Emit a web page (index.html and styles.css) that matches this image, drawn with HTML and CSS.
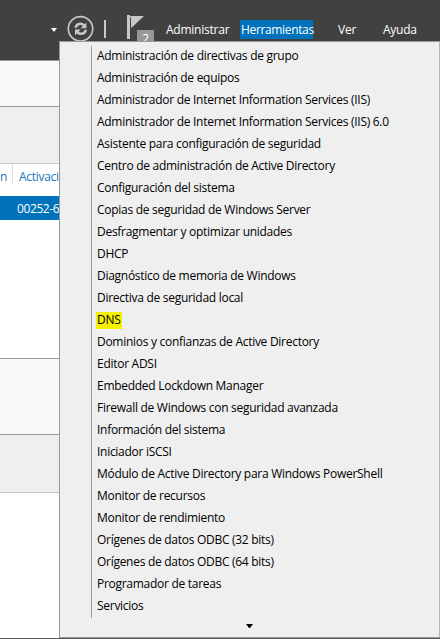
FILE: index.html
```
<!DOCTYPE html>
<html lang="es">
<head>
<meta charset="utf-8">
<title>Herramientas</title>
<link rel="stylesheet" href="styles.css">
</head>
<body>
<div class="window">
  <header class="toolbar">
    <span class="caret"></span>
    <svg class="refresh" width="28" height="28" viewBox="0 0 28 28" fill="none" stroke="#c8c8c8">
      <circle cx="13.5" cy="13.8" r="12.2" stroke-width="1.6"/>
      <path d="M8.8 12.8C9 9 14 7.4 17.2 10.4M18.6 14.8C18.4 18.6 13.6 20.2 10.4 17.2" stroke-width="2.6"/>
      <path d="M19.4 7.4v5.8h-5.8zM8 20.2v-5.8h5.8z" fill="#c8c8c8" stroke="none"/>
    </svg>
    <span class="divider"></span>
    <div class="flag">
      <svg width="28" height="27" viewBox="0 0 28 27">
        <path d="M0 0h3v24H0zM3 1h14L4.3 13z" fill="#c8c8c8"/>
        <path d="M3.5 2.5v9" stroke="#414141"/>
      </svg>
      <span class="badge">2</span>
    </div>
    <nav class="menubar">
      <span class="m1">Administrar</span><span class="m2 active">Herramientas</span><span class="m3">Ver</span><span class="m4">Ayuda</span>
    </nav>
  </header>
  <main class="content">
    <div class="band light first"></div>
    <div class="band gray upper"></div>
    <div class="row heads"><span class="prev">n</span><span class="col">Activaci</span></div>
    <div class="row selected"><span>00252-6</span></div>
    <div class="space"></div>
    <div class="band light second"></div>
    <div class="band gray lower"></div>
  </main>
  <div class="dropdown">
    <ul class="items">
      <li>Administración de directivas de grupo</li>
      <li>Administración de equipos</li>
      <li>Administrador de Internet Information Services (IIS)</li>
      <li>Administrador de Internet Information Services (IIS) 6.0</li>
      <li>Asistente para configuración de seguridad</li>
      <li>Centro de administración de Active Directory</li>
      <li>Configuración del sistema</li>
      <li>Copias de seguridad de Windows Server</li>
      <li>Desfragmentar y optimizar unidades</li>
      <li>DHCP</li>
      <li>Diagnóstico de memoria de Windows</li>
      <li>Directiva de seguridad local</li>
      <li><mark>DNS</mark></li>
      <li>Dominios y confianzas de Active Directory</li>
      <li>Editor ADSI</li>
      <li>Embedded Lockdown Manager</li>
      <li>Firewall de Windows con seguridad avanzada</li>
      <li>Información del sistema</li>
      <li>Iniciador iSCSI</li>
      <li>Módulo de Active Directory para Windows PowerShell</li>
      <li>Monitor de recursos</li>
      <li>Monitor de rendimiento</li>
      <li>Orígenes de datos ODBC (32 bits)</li>
      <li>Orígenes de datos ODBC (64 bits)</li>
      <li>Programador de tareas</li>
      <li>Servicios</li>
    </ul>
    <span class="more"></span>
  </div>
</div>
</body>
</html>
```
FILE: styles.css
```
* { box-sizing: border-box; }
body { margin: 0; font: 12px/16px "Open Sans", "Noto Sans", sans-serif; letter-spacing: -0.28px; color: #000; }
.window { position: relative; width: 440px; height: 639px; overflow: hidden; background: #fff; border-bottom: 1px solid #555; }
.toolbar { display: flex; align-items: flex-start; height: 60px; padding-top: 15px; background: #414141; color: #fff; }
.caret { margin: 13px 0 0 51px; border: 3.5px solid transparent; border-top: 4px solid #fff; border-bottom: 0; }
.refresh { margin: 0 0 0 10px; }
.divider { width: 2px; height: 18px; margin: 5px 0 0 9px; background: #c8c8c8; }
.flag { position: relative; width: 28px; height: 27px; margin-left: 21px; }
.flag svg { display: block; }
.badge { position: absolute; left: 10px; top: 15px; width: 17px; height: 18px; background: #97979a; text-align: center; line-height: 17px; }
.menubar { display: flex; margin-top: 5px; line-height: 19px; white-space: nowrap; letter-spacing: -0.24px; }
.m1 { width: 76px; margin-left: 9px; padding-left: 2px; }
.m2 { width: 73px; }
.m3 { margin-left: 25px; width: 45px; }
.active { background: #0072bc; padding-left: 1px; letter-spacing: -0.35px; }
.content { width: 60px; }
.band { border-top: 1px solid #999; }
.light { background: #f8f8f8; }
.gray { background: #efefef; }
.first { height: 46px; }
.upper { height: 58px; border-bottom: 1px solid #c8c8c8; }
.row { display: flex; overflow: hidden; white-space: nowrap; }
.heads { height: 32px; color: #2374b5; line-height: 25px; }
.prev { flex: none; width: 13px; height: 19px; border-right: 1px solid #ddd; }
.col { padding-left: 6px; letter-spacing: -0.3px; }
.selected { height: 24px; background: #0072bc; color: #fff; line-height: 25px; padding-left: 17px; letter-spacing: -0.4px; }
.space { height: 138px; }
.second { height: 76px; }
.lower { height: 59px; border-bottom: 1px solid #c8c8c8; }
.dropdown { position: absolute; left: 59px; top: 41px; width: 381px; height: 597px; padding: 4px 0 0 31px; background: #efefef; border: 1px solid #999; border-right-color: #b5b5b5; }
.items { list-style: none; margin: 0; padding: 0 0 0 5px; border-left: 1px solid #999; }
.items li { height: 22px; line-height: 20px; white-space: nowrap; }
mark { display: inline-block; height: 17px; line-height: 16px; margin: 0 0 0 -1px; padding: 0 2px 0 1px; background: #f4f000; color: #000; }
.more { display: block; width: 7px; margin: 6px 0 0 155px; border: 3.5px solid transparent; border-top: 4px solid #000; border-bottom: 0; }
```
